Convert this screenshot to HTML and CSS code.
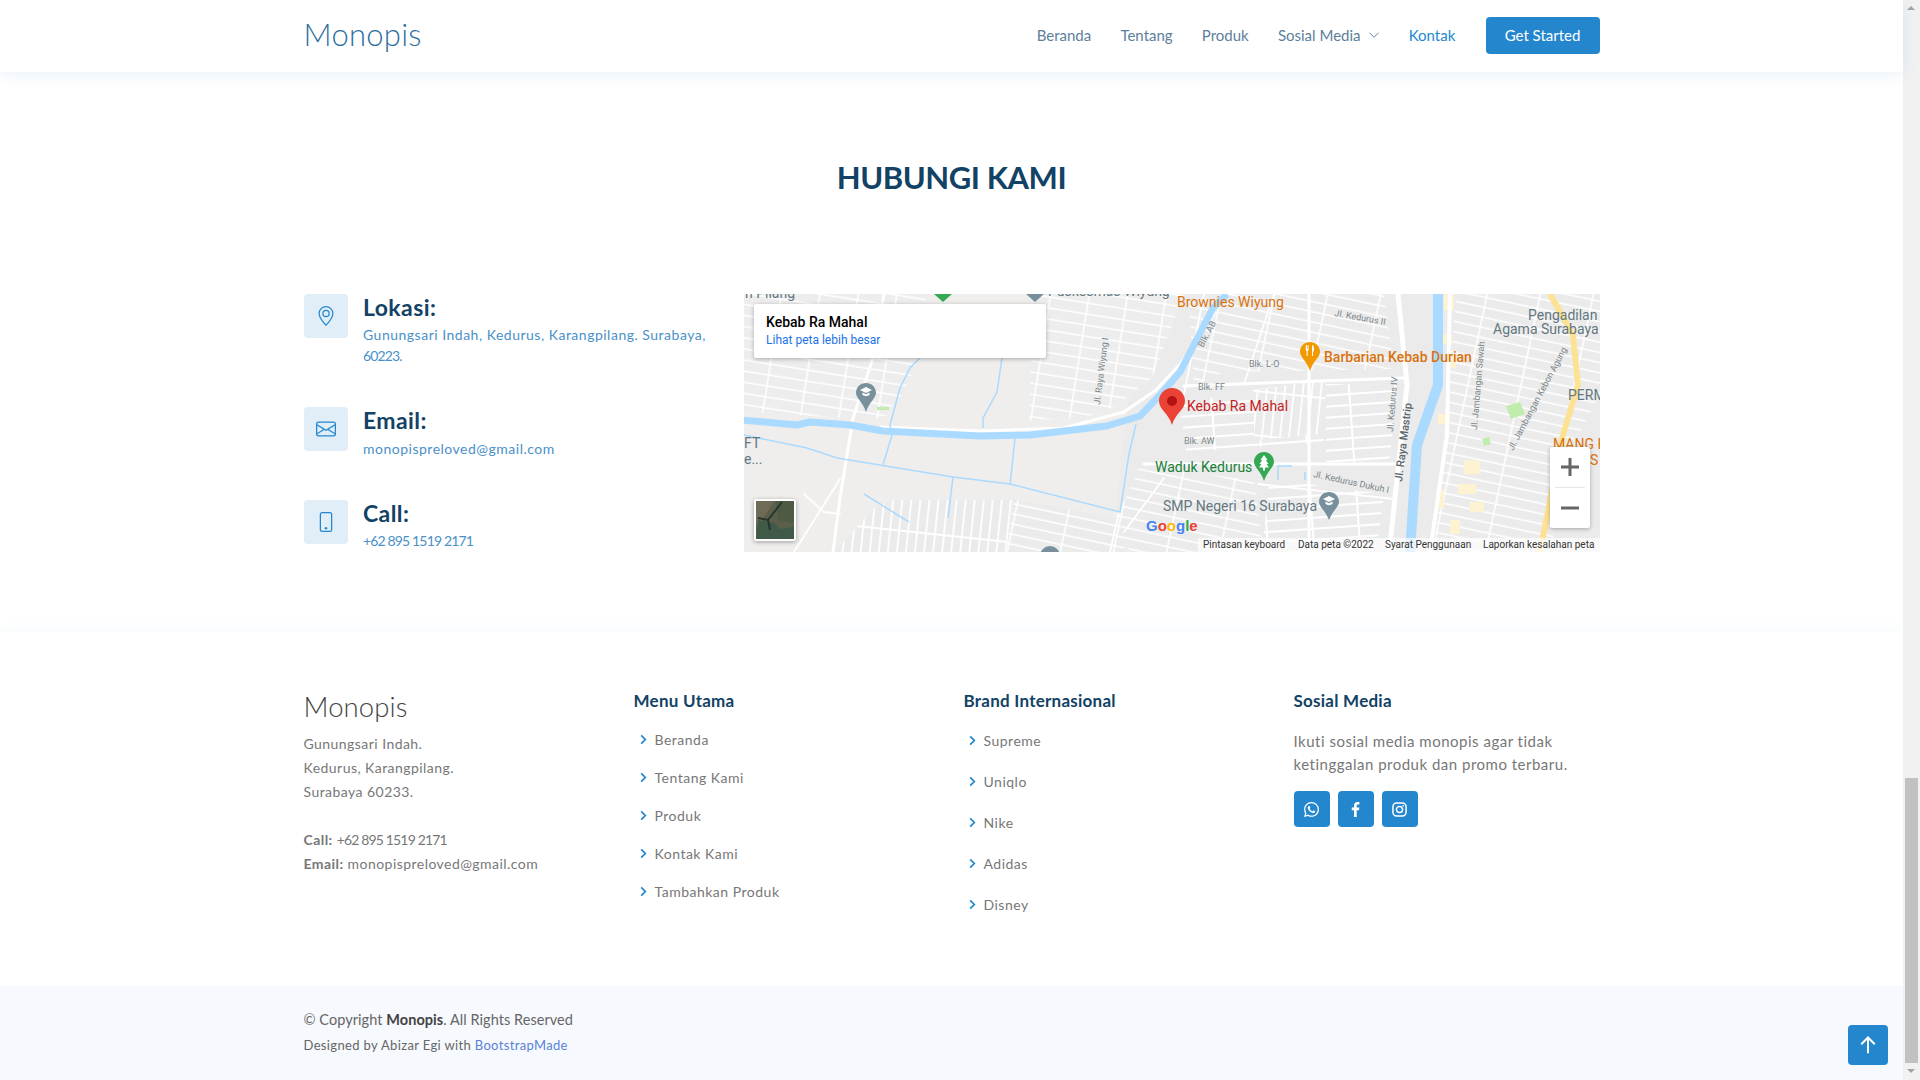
FILE: index.html
```html
<!DOCTYPE html>
<html lang="id">
<head>
<meta charset="utf-8">
<title>Monopis</title>
<link rel="stylesheet" href="styles.css">
</head>
<body>
<div class="page">
  <header class="site-header">
    <div class="container header-row">
      <a class="logo">Monopis</a>
      <nav class="nav">
        <a>Beranda</a>
        <a>Tentang</a>
        <a>Produk</a>
        <a class="has-caret">Sosial Media
          <svg class="caret" viewBox="0 0 16 16"><path d="M2 5l6 6 6-6"/></svg>
        </a>
        <a class="active">Kontak</a>
        <a class="cta">Get Started</a>
      </nav>
    </div>
  </header>

  <section class="contact">
    <div class="container">
      <h2 class="section-title">HUBUNGI KAMI</h2>
      <div class="contact-grid">
        <div class="info">
          <div class="info-item first">
            <span class="info-icon"><svg viewBox="0 0 16 16"><path d="M12.166 8.94c-.524 1.062-1.234 2.12-1.96 3.07A31.493 31.493 0 0 1 8 14.58a31.481 31.481 0 0 1-2.206-2.57c-.726-.95-1.436-2.008-1.96-3.07C3.304 7.867 3 6.862 3 6a5 5 0 0 1 10 0c0 .862-.305 1.867-.834 2.94zM8 16s6-5.686 6-10A6 6 0 0 0 2 6c0 4.314 6 10 6 10z"/><path d="M8 8a2 2 0 1 1 0-4 2 2 0 0 1 0 4zm0 1a3 3 0 1 0 0-6 3 3 0 0 0 0 6z"/></svg></span>
            <div><h4>Lokasi:</h4><p>Gunungsari Indah, Kedurus, Karangpilang. Surabaya, <span class="num">60223.</span></p></div>
          </div>
          <div class="info-item tall">
            <span class="info-icon"><svg viewBox="0 0 16 16"><path d="M0 4a2 2 0 0 1 2-2h12a2 2 0 0 1 2 2v8a2 2 0 0 1-2 2H2a2 2 0 0 1-2-2V4Zm2-1a1 1 0 0 0-1 1v.217l7 4.2 7-4.2V4a1 1 0 0 0-1-1H2Zm13 2.383-4.708 2.825L15 11.105V5.383Zm-.034 6.876-5.64-3.471L8 9.583l-1.326-.795-5.64 3.47A1 1 0 0 0 2 13h12a1 1 0 0 0 .966-.741ZM1 11.105l4.708-2.897L1 5.383v5.722Z"/></svg></span>
            <div><h4>Email:</h4><p>monopispreloved@gmail.com</p></div>
          </div>
          <div class="info-item last">
            <span class="info-icon"><svg viewBox="0 0 16 16"><path d="M11 1a1 1 0 0 1 1 1v12a1 1 0 0 1-1 1H5a1 1 0 0 1-1-1V2a1 1 0 0 1 1-1h6zM5 0a2 2 0 0 0-2 2v12a2 2 0 0 0 2 2h6a2 2 0 0 0 2-2V2a2 2 0 0 0-2-2H5z"/><path d="M8 14a1 1 0 1 0 0-2 1 1 0 0 0 0 2z"/></svg></span>
            <div><h4>Call:</h4><p><span class="num">+62 895 1519 2171</span></p></div>
          </div>
        </div>

        <div class="map">
          <svg class="map-art" viewBox="0 0 856 258" width="856" height="258">
            <defs>
              <pattern id="blkA" width="38" height="11" patternUnits="userSpaceOnUse" patternTransform="rotate(9)">
                <rect width="38" height="11" fill="#eeeded"/>
                <path d="M0 10.2H38M37 0V11" stroke="#fff" stroke-width="1.6"/>
              </pattern>
              <pattern id="blkB" width="52" height="10" patternUnits="userSpaceOnUse" patternTransform="rotate(12)">
                <rect width="52" height="10" fill="#ebebeb"/>
                <path d="M0 9.2H52M51 0V10" stroke="#fff" stroke-width="1.6"/>
              </pattern>
              <pattern id="blkC" width="9" height="44" patternUnits="userSpaceOnUse" patternTransform="rotate(6)">
                <rect width="9" height="44" fill="#ebebeb"/>
                <path d="M8 0V44M0 43H9" stroke="#fff" stroke-width="1.8"/>
              </pattern>
              <pattern id="blkD" width="46" height="11" patternUnits="userSpaceOnUse" patternTransform="rotate(-4)">
                <rect width="46" height="11" fill="#ebebeb"/>
                <path d="M0 10H46M45 0V11" stroke="#fff" stroke-width="2"/>
              </pattern>
            </defs>
            <rect width="856" height="258" fill="#efeeec"/>
            <polygon points="400,0 856,0 856,258 386,258 372,215 380,135" fill="#ebebeb"/>

            <polygon points="0,0 182,0 176,60 160,98 140,124 108,124 66,122 0,118" fill="url(#blkA)"/>
            <polygon points="290,0 440,0 408,84 372,112 340,124 285,126" fill="url(#blkA)"/>
            <polygon points="130,214 150,206 268,206 380,238 372,258 90,258" fill="url(#blkC)"/>
            <polygon points="270,205 262,258 380,258 382,226" fill="url(#blkB)"/>
            <polygon points="396,172 424,176 510,186 520,258 386,258 372,226" fill="url(#blkB)"/>
            <polygon points="445,10 475,0 640,0 650,75 480,78 450,92" fill="url(#blkB)"/>
            <polygon points="435,110 575,84 580,148 442,158" fill="url(#blkD)"/>
            <polygon points="582,90 654,90 645,170 582,168" fill="url(#blkD)"/>
            <polygon points="510,96 582,86 580,140 510,146" fill="url(#blkC)"/>
            <polygon points="525,185 640,200 632,258 518,258" fill="url(#blkD)"/>
            <polygon points="712,0 856,0 856,100 830,150 806,258 690,258 700,140" fill="url(#blkB)"/>

            <g class="beige">
              <path d="M700 0h10v16h-10zM698 40h10v10h-10zM694 120h12v10h-12zM720 166h16v14h-16zM714 190h18v10h-18zM726 208h14v10h-14zM706 226h10v14h-10zM692 196h8v18h-8zM704 60h8v14h-8z"/>
            </g>
            <path class="park" d="M762 112l14-4 5 12-14 5zM738 145l7-2 2 7-7 2z"/>
            <path class="park" d="M133 113h12v3h-12z"/>

            <g class="road">
              <path class="r5" d="M654 0L663 91 646 251 644 258"/>
              <path class="r4" d="M706 0L703 141 686 258"/>
              <path class="r3" d="M140 0L129 64 109 124 96 204 89 258"/>
              <path class="r3" d="M137 133L236 137 320 134 380 118 412 96 438 68 470 20"/>
              <path class="r3" d="M565 0V258M440 92L660 84M400 170H660"/>
              <path class="r2" d="M96 185L50 258M60 200L80 218 96 220"/>
              <path class="r2" d="M375 218L366 258M420 184L380 238M514 190L650 205"/>
              <path class="r2" d="M460 0L440 100M530 0L500 90"/>
            </g>

            <g class="water-thin">
              <path d="M0 141L63 154 93 164 209 183 266 190 376 218 385 160 392 130"/>
              <path d="M258 64L253 98 239 124 239 134"/>
              <path d="M176 64L166 74 156 94 146 131 148 141 139 171"/>
              <path d="M271 144L266 191M209 183L204 224M120 200L165 228"/>
              <path d="M534 186V172H548M561 178V186"/>
            </g>
            <path class="canal" d="M-2 126L53 131 66 128 106 131 139 137 236 142 286 141 363 132 396 122 416 101 436 78 469 14 483 0"/>
            <path class="canal wide" d="M694 0V91L673 151 666 258"/>
            <path class="yellow" d="M806 0L829 41 834 91 819 141 796 258"/>

            <g class="label-orange">
              <text x="433" y="13" class="t14">Brownies Wiyung</text>
              <text x="580" y="68" class="t14 med">Barbarian Kebab Durian</text>
              <text x="809" y="155" class="t14">MANG K</text>
              <text x="846" y="171" class="t14">S</text>
            </g>
            <text x="443" y="117" class="t14 label-red">Kebab Ra Mahal</text>
            <text x="411" y="178" class="t14 label-green">Waduk Kedurus</text>
            <g class="label-gray">
              <text x="419" y="217" class="t14">SMP Negeri 16 Surabaya</text>
              <text x="784" y="26" class="t14">Pengadilan</text>
              <text x="749" y="40" class="t14">Agama Surabaya</text>
              <text x="824" y="106" class="t14">PERM</text>
              <text x="1" y="4" class="t14">n Pilang</text>
              <text x="304" y="2" class="t14">Puskesmas Wiyung</text>
              <text x="0" y="154" class="t14">FT</text>
              <text x="0" y="170" class="t14">e...</text>
            </g>
            <g class="street">
              <text transform="translate(590 22) rotate(10)">Jl. Kedurus II</text>
              <text transform="translate(459 54) rotate(-62)">Blk. AB</text>
              <text x="505" y="73">Blk. L-O</text>
              <text x="454" y="96">Blk. FF</text>
              <text x="440" y="150">Blk. AW</text>
              <text transform="translate(649 138) rotate(-85)">Jl. Kedurus IV</text>
              <text transform="translate(733 136) rotate(-85)">Jl. Jambangan Sawah</text>
              <text transform="translate(769 157) rotate(-62)">Jl. Jambangan Kebon Agung</text>
              <text transform="translate(569 183) rotate(12)">Jl. Kedurus Dukuh I</text>
              <text transform="translate(356 111) rotate(-83)">Jl. Raya Wiyung I</text>
              <text class="street-big" transform="translate(658 188) rotate(-83)">Jl. Raya Mastrip</text>
            </g>

            <g class="pin-gray">
              <path d="M122 89c-5.400 0-10 4.200-10 9.800 0 5.500 6.500 8.800 10 19.200 3.500-10.400 10-13.700 10-19.200C132 93.200 127.400 89 122 89z"/>
              <path d="M585 198c-5.400 0-10 4.200-10 9.800 0 5.500 6.500 8.800 10 18.200 3.500-9.400 10-12.700 10-18.200C595 202.200 590.400 198 585 198z"/>
              <circle cx="306" cy="262" r="10"/>
              <path d="M282 0h18l-9 8z"/>
            </g>
            <path class="cap" d="M122 93l6 3-6 3-6-3zM118.500 98.500v2.500c2 1.500 5 1.500 7 0v-2.500l-3.500 1.700zM585 202l6 3-6 3-6-3zM581.500 207.500v2.500c2 1.500 5 1.500 7 0v-2.500l-3.500 1.700z"/>
            <path class="pin-green" d="M190 0h18l-9 8zM520 158c-5.400 0-10 4.200-10 9.800 0 5.500 6.500 8.800 10 19.200 3.500-10.400 10-13.700 10-19.200C530 162.200 525.400 158 520 158z"/>
            <path class="cap" d="M520 161l3.500 5h-1.700l2.700 4h-1.900l2.400 3.500h-4v3h-2v-3h-4l2.400-3.500h-1.900l2.700-4h-1.700z"/>
            <path class="pin-orange" d="M566 48c-5.400 0-10 4.200-10 9.800 0 5.500 6.500 8.800 10 19.200 3.500-10.400 10-13.700 10-19.200C576 52.200 571.400 48 566 48z"/>
            <path class="cap" d="M562 51h1v4h.6v-4h1v4.500c0 .8-.5 1.300-1 1.500v5h-1v-5c-.5-.2-1-.7-1-1.500zM568 51c1.500 0 2 2 2 4s-.5 3-1 3v4h-1z"/>
            <path class="pin-red" d="M428 94c-7.200 0-13 5.800-13 13 0 8.500 9.500 12 13 24 3.500-12 13-15.500 13-24 0-7.200-5.800-13-13-13z"/>
            <circle class="pin-red-dot" cx="428" cy="107" r="5"/>

            <g class="thumb">
              <rect x="10" y="205" width="42" height="42" rx="2" fill="#fff"/>
              <rect x="12" y="207" width="38" height="38" fill="#5b5f4a"/>
              <path d="M12 207h18l-12 20-6 4z" fill="#6e6a55"/>
              <path d="M32 207h18v22l-16-2z" fill="#4f5a45"/>
              <path d="M14 226l16 3 6 6 14-2v12H12z" fill="#3f5a48"/>
              <path d="M38 208L24 226 14 224M24 226l2 10" stroke="#25352c" stroke-width="2" fill="none"/>
            </g>
            <text x="402" y="237" class="goog"><tspan class="g-b">G</tspan><tspan class="g-r">o</tspan><tspan class="g-y">o</tspan><tspan class="g-b">g</tspan><tspan class="g-g">l</tspan><tspan class="g-r">e</tspan></text>
            <rect x="454" y="244" width="402" height="14" fill="#fff" fill-opacity=".7"/>
            <g class="attrib">
              <text x="459" y="254">Pintasan keyboard</text>
              <text x="554" y="254">Data peta ©2022</text>
              <text x="641" y="254">Syarat Penggunaan</text>
              <text x="739" y="254">Laporkan kesalahan peta</text>
            </g>
          </svg>
          <div class="map-card">
            <div class="map-card-title">Kebab Ra Mahal</div>
            <a class="map-card-link">Lihat peta lebih besar</a>
          </div>
          <div class="map-zoom">
            <span class="zoom-btn"><svg viewBox="0 0 18 18"><path d="M7.500 0h3v7.500H18v3h-7.500V18h-3v-7.500H0v-3h7.500z"/></svg></span>
            <span class="zoom-sep"></span>
            <span class="zoom-btn"><svg viewBox="0 0 18 18"><path d="M0 7.500h18v3H0z"/></svg></span>
          </div>
        </div>
      </div>
    </div>
  </section>

  <footer class="footer">
    <div class="footer-top">
      <div class="container footer-grid">
        <div class="fcol">
          <h3 class="flogo">Monopis</h3>
          <p class="faddr">Gunungsari Indah.<br>Kedurus, Karangpilang.<br>Surabaya 60233.<br><br><strong>Call:</strong> <span class="num">+62 895 1519 2171</span><br><strong>Email:</strong> monopispreloved@gmail.com</p>
        </div>
        <div class="fcol">
          <h4>Menu Utama</h4>
          <ul class="flinks">
            <li><svg class="chev" viewBox="0 0 8 12"><path d="M2 1.500L6.500 6 2 10.500"/></svg>Beranda</li>
            <li><svg class="chev" viewBox="0 0 8 12"><path d="M2 1.500L6.500 6 2 10.500"/></svg>Tentang Kami</li>
            <li><svg class="chev" viewBox="0 0 8 12"><path d="M2 1.500L6.500 6 2 10.500"/></svg>Produk</li>
            <li><svg class="chev" viewBox="0 0 8 12"><path d="M2 1.500L6.500 6 2 10.500"/></svg>Kontak Kami</li>
            <li><svg class="chev" viewBox="0 0 8 12"><path d="M2 1.500L6.500 6 2 10.500"/></svg>Tambahkan Produk</li>
          </ul>
        </div>
        <div class="fcol">
          <h4>Brand Internasional</h4>
          <ul class="flinks wide">
            <li><svg class="chev" viewBox="0 0 8 12"><path d="M2 1.500L6.500 6 2 10.500"/></svg>Supreme</li>
            <li><svg class="chev" viewBox="0 0 8 12"><path d="M2 1.500L6.500 6 2 10.500"/></svg>Uniqlo</li>
            <li><svg class="chev" viewBox="0 0 8 12"><path d="M2 1.500L6.500 6 2 10.500"/></svg>Nike</li>
            <li><svg class="chev" viewBox="0 0 8 12"><path d="M2 1.500L6.500 6 2 10.500"/></svg>Adidas</li>
            <li><svg class="chev" viewBox="0 0 8 12"><path d="M2 1.500L6.500 6 2 10.500"/></svg>Disney</li>
          </ul>
        </div>
        <div class="fcol">
          <h4>Sosial Media</h4>
          <p class="fsocial">Ikuti sosial media monopis agar tidak ketinggalan produk dan promo terbaru.</p>
          <div class="social-row">
            <a class="social"><svg viewBox="0 0 16 16"><path d="M13.601 2.326A7.854 7.854 0 0 0 7.994 0C3.627 0 .068 3.558.064 7.926c0 1.399.366 2.76 1.057 3.965L0 16l4.204-1.102a7.933 7.933 0 0 0 3.79.965h.004c4.368 0 7.926-3.558 7.93-7.93A7.898 7.898 0 0 0 13.6 2.326zM7.994 14.521a6.573 6.573 0 0 1-3.356-.92l-.24-.144-2.494.654.666-2.433-.156-.251a6.56 6.56 0 0 1-1.007-3.505c0-3.626 2.957-6.584 6.591-6.584a6.56 6.56 0 0 1 4.66 1.931 6.557 6.557 0 0 1 1.928 4.66c-.004 3.639-2.961 6.592-6.592 6.592zm3.615-4.934c-.197-.099-1.17-.578-1.353-.646-.182-.065-.315-.099-.445.099-.133.197-.513.646-.627.775-.114.133-.232.148-.43.05-.197-.1-.836-.308-1.592-.985-.59-.525-.985-1.175-1.103-1.372-.114-.198-.011-.304.088-.403.087-.088.197-.232.296-.346.1-.114.133-.198.198-.33.065-.134.034-.248-.015-.347-.05-.099-.445-1.076-.612-1.47-.16-.389-.323-.335-.445-.34-.114-.007-.247-.007-.38-.007a.729.729 0 0 0-.529.247c-.182.198-.691.677-.691 1.654 0 .977.71 1.916.81 2.049.098.133 1.394 2.132 3.383 2.992.47.205.84.326 1.129.418.475.152.904.129 1.246.08.38-.058 1.171-.48 1.338-.943.164-.464.164-.86.114-.943-.049-.084-.182-.133-.38-.232z"/></svg></a>
            <a class="social"><svg viewBox="0 0 16 16"><path d="M9.300 16V8.700h2.400l.4-2.800H9.300V4.100c0-.8.2-1.400 1.400-1.400h1.500V.2C11.900.1 11 0 10 0 7.900 0 6.400 1.300 6.400 3.700v2.200H4v2.800h2.400V16z"/></svg></a>
            <a class="social"><svg class="ig" viewBox="0 0 16 16"><rect x="1" y="1" width="14" height="14" rx="4"/><circle cx="8" cy="8" r="3.300"/><circle class="ig-dot" cx="12" cy="4" r=".9"/></svg></a>
          </div>
        </div>
      </div>
    </div>
    <div class="footer-bottom">
      <div class="container">
        <div class="copy">© Copyright <strong>Monopis</strong>. All Rights Reserved</div>
        <div class="credit">Designed by Abizar Egi with <a>BootstrapMade</a></div>
      </div>
    </div>
  </footer>
</div>
<div class="scrollbar">
  <span class="sb-arrow up"></span>
  <span class="sb-track"><span class="sb-thumb"></span></span>
  <span class="sb-arrow down"></span>
</div>
<a class="back-top"><svg viewBox="0 0 16 16"><path d="M8 13.500V3M3.500 7.500L8 3l4.500 4.500"/></svg></a>
</body>
</html>
```

FILE: styles.css
```css
* { box-sizing: border-box; }
html, body { height: 100%; }
body {
  margin: 0;
  display: flex;
  height: 100vh;
  overflow: hidden;
  background: #fff;
  font-family: "Lato", "Noto Sans", sans-serif;
  color: #444;
}
h2, h3, h4, p, ul { margin: 0; padding: 0; }
.page { flex: 1; min-width: 0; height: 100vh; display: flex; flex-direction: column; }
.container { width: 1296px; margin: 0 auto; }

/* header */
.site-header { height: 72px; background: #fff; box-shadow: 0 2px 15px rgba(25,119,204,.1); position: relative; z-index: 2; }
.header-row { height: 71px; display: flex; align-items: center; justify-content: space-between; }
.logo { font-size: 31px; font-weight: 300; color: #2f6f9f; letter-spacing: .25px; padding-bottom: 3px; }
.nav { display: flex; align-items: center; gap: 29.200px; font-size: 15px; color: #5d7f9c; }
.nav a { display: flex; align-items: center; padding-bottom: 2px; }
.nav .active { color: #2487ce; }
.caret { width: 12px; height: 12px; margin-left: 7px; fill: none; stroke: currentColor; stroke-width: 1.3; }
.nav .cta { width: 114px; height: 37px; justify-content: center; background: #2487ce; color: #fff; border-radius: 4px; margin-left: 1px; }

/* contact */
.contact { padding: 86px 0 80px; }
.section-title { font-size: 31px; line-height: 38px; font-weight: 700; text-align: center; color: #124265; margin-bottom: 98px; letter-spacing: -.45px; }
.contact-grid { display: grid; grid-template-columns: 416px 856px; gap: 24px; }
.info-item { display: flex; gap: 15.500px; margin-bottom: 40px; }
.info-item.first { margin-bottom: 41px; }
.info-item.first h4 { margin-bottom: 4px; }
.info-item.tall { margin-bottom: 41px; }
.info-item.last { margin-bottom: 0; }
.info-icon { flex: 0 0 44px; width: 44px; height: 44px; border-radius: 4px; background: #e1eef8; display: flex; align-items: center; justify-content: center; }
.info-icon svg { width: 20px; height: 20px; fill: #2487ce; }
.info-item h4 { font-size: 23px; line-height: 26px; font-weight: 700; color: #124265; margin-bottom: 5px; letter-spacing: .4px; }
.info-item.last h4 { margin-bottom: 4px; }
.info-item p { font-size: 14px; line-height: 21px; color: #4a90c8; letter-spacing: .5px; }
.num { letter-spacing: -.85px; }
.info-item p .num { letter-spacing: -.85px; }

/* map */
.map { position: relative; width: 856px; height: 258px; overflow: hidden; }
.map-art { display: block; font-family: "Roboto", sans-serif; }
.road path { fill: none; stroke: #fff; stroke-linecap: round; stroke-linejoin: round; }
.r5 { stroke-width: 5; }
.r4 { stroke-width: 4; }
.r3 { stroke-width: 3; }
.r2 { stroke-width: 1.8; }
.canal { fill: none; stroke: #aadaff; stroke-width: 7; stroke-linejoin: round; }
.canal.wide { stroke-width: 10; }
.water-thin path { fill: none; stroke: #aadaff; stroke-width: 1.5; }
.yellow { fill: none; stroke: #fde293; stroke-width: 6; }
.beige { fill: #fef3d0; }
.park { fill: #c0ecae; }
.t14 { font-size: 14px; }
.med { font-weight: 500; }
.label-orange { fill: #d9730d; }
.label-red { fill: #c5221f; }
.label-green { fill: #188038; }
.label-gray { fill: #63777f; }
.street { font-size: 9px; fill: #7b858a; }
.street-big { font-size: 11px; fill: #5b666b; font-weight: 500; }
.pin-gray { fill: #78909c; }
.cap { fill: #fff; }
.pin-green { fill: #34a853; }
.pin-orange { fill: #f29900; }
.pin-red { fill: #ea4335; }
.pin-red-dot { fill: #b31412; }
.thumb { filter: drop-shadow(0 1px 2px rgba(0,0,0,.35)); }
.goog { font-family: "Liberation Sans", sans-serif; font-weight: 700; font-size: 15px; }
.g-b { fill: #4285f4; }
.g-r { fill: #ea4335; }
.g-y { fill: #fbbc05; }
.g-g { fill: #34a853; }
.attrib { font-size: 10px; fill: #333; }
.map-card {
  position: absolute; left: 10px; top: 10px; width: 292px; height: 54px;
  background: #fff; border-radius: 2px; box-shadow: 0 1px 4px rgba(0,0,0,.3);
  padding: 10px 12px 0 12.500px; font-family: "Roboto", sans-serif;
}
.map-card-title { font-size: 14px; line-height: 17px; font-weight: 500; color: #000; }
.map-card-link { display: block; font-size: 12px; line-height: 18px; color: #1a73e8; }
.map-zoom { position: absolute; left: 806px; top: 153px; width: 40px; height: 81px; background: #fff; box-shadow: 0 1px 4px rgba(0,0,0,.3); border-radius: 2px; display: flex; flex-direction: column; align-items: center; }
.zoom-btn { flex: 1; display: flex; align-items: center; justify-content: center; }
.zoom-btn svg { width: 18px; height: 18px; fill: #666; }
.zoom-sep { width: 30px; height: 1px; background: #e6e6e6; }

/* footer */
.footer { flex: 1; display: flex; flex-direction: column; box-shadow: 0 -4px 10px rgba(25,119,204,.03); }
.footer-top { flex: 1; padding-top: 60px; }
.footer-grid { display: grid; grid-template-columns: repeat(4, 306px); gap: 24px; }
.fcol h4 { font-size: 17px; line-height: 18px; font-weight: 700; color: #124265; letter-spacing: .25px; }
.flogo { font-size: 27.500px; line-height: 34px; font-weight: 300; color: #444; margin-top: -2px; margin-bottom: 8px; letter-spacing: .1px; }
.faddr { font-size: 14px; line-height: 24px; color: #777; letter-spacing: .45px; }
.faddr strong { font-weight: 700; }
.flinks { list-style: none; margin-top: 10px; }
.flinks li { height: 38px; display: flex; align-items: center; padding-left: 5px; font-size: 14px; color: #777; letter-spacing: .5px; }
.flinks.wide { margin-top: 10px; }
.flinks.wide li { height: 41px; padding-left: 4px; }
.chev { width: 8px; height: 11px; margin-right: 8px; fill: none; stroke: #2487ce; stroke-width: 1.9; }
.fsocial { margin-top: 20px; font-size: 15px; line-height: 23px; color: #777; letter-spacing: .5px; }
.social-row { display: flex; gap: 8px; margin-top: 15px; }
.social { width: 36px; height: 36px; background: #2487ce; border-radius: 4px; display: flex; align-items: center; justify-content: center; }
.social svg { width: 15px; height: 15px; fill: #fff; }
.social .ig { fill: none; stroke: #fff; stroke-width: 1.6; }
.social .ig-dot { fill: #fff; stroke: none; }
.footer-bottom { height: 94px; background: #f6f9fd; padding-top: 22px; }
.copy { font-size: 14.500px; line-height: 24px; color: #666; letter-spacing: .05px; }
.copy strong { color: #444; }
.credit { font-size: 13px; line-height: 26px; color: #666; letter-spacing: .35px; }
.credit a { color: #5a82d8; }

/* scrollbar */
.scrollbar { flex: 0 0 17px; width: 17px; height: 100vh; background: #f1f1f1; display: flex; flex-direction: column; align-items: center; }
.sb-arrow { height: 17px; flex: 0 0 17px; position: relative; width: 100%; }
.sb-arrow::after { content: ""; position: absolute; left: 4px; top: 6px; border-left: 4px solid transparent; border-right: 4px solid transparent; }
.sb-arrow.up::after { border-bottom: 4px solid #a3a3a3; }
.sb-arrow.down::after { border-top: 4px solid #a3a3a3; }
.sb-track { flex: 1; width: 100%; display: flex; flex-direction: column; justify-content: flex-end; padding: 0 2px; }
.sb-thumb { height: 285px; background: #c1c1c1; display: block; }

.back-top { position: fixed; left: 1848px; top: 1025px; width: 40px; height: 40px; background: #2487ce; border-radius: 4px; display: flex; align-items: center; justify-content: center; }
.back-top svg { width: 24px; height: 24px; fill: none; stroke: #fff; stroke-width: 1.3; }
```
